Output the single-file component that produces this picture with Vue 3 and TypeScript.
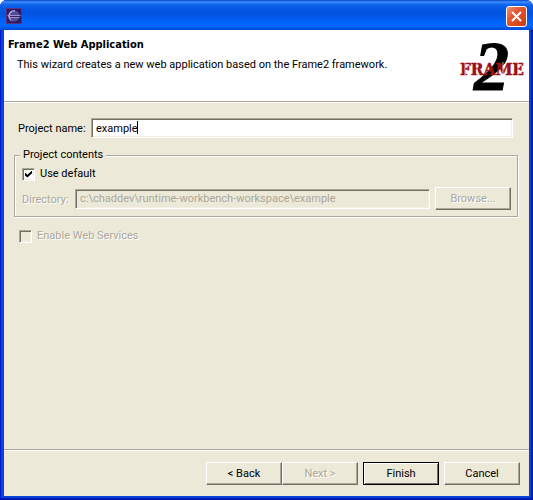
<script setup lang="ts">
import { ref } from 'vue'

const projectName = ref('example')
const useDefault = ref(true)
const webServices = ref(false)
const directory = ref('c:\\chaddev\\runtime-workbench-workspace\\example')
</script>

<template>
  <form class="window" @submit.prevent>
    <div class="titlebar">
      <svg class="app-icon" viewBox="0 0 16 16" aria-hidden="true">
        <rect width="16" height="16" fill="#2c1a66" />
        <rect x="0.5" y="0.5" width="15" height="15" fill="none" stroke="#5a3078" />
        <circle cx="8" cy="8" r="5.500" fill="#564b98" />
        <path d="M6 2.500a6 6 0 0 0 0 11 8 8 0 0 1 0-11z" fill="#b4b8e0" />
        <path d="M4.500 4.500Q6 2.500 9 2.800" fill="none" stroke="#cfd2f0" />
        <path d="M1.500 7.500h13M2.500 9.500h11" stroke="#9c90d0" />
        <path d="M4 8.500h10" stroke="#30205f" />
      </svg>
      <button class="close" type="button" aria-label="Close">
        <svg viewBox="0 0 19 19" aria-hidden="true">
          <path d="M5 5L14 14M14 5L5 14" stroke="#fff" stroke-width="2" />
        </svg>
      </button>
    </div>

    <div class="body">
      <header class="header">
        <div class="heading">
          <h1>Frame2 Web Application</h1>
          <p>This wizard creates a new web application based on the Frame2 framework.</p>
        </div>
        <svg class="logo" viewBox="0 0 70 60" role="img" aria-label="Frame2">
          <text class="logo-two" x="17" y="52">2</text>
          <text class="logo-word" x="3" y="37">FRAME</text>
          <path d="M8 24v14M20 24v14M46 24v14M61 24v14" stroke="#fff" stroke-width="0.700" />
        </svg>
      </header>

      <main class="content">
        <div class="row name-row">
          <label for="name">Project name:</label>
          <div class="name-box">
            <input id="name" v-model="projectName" class="field" type="text" />
            <span class="caret" aria-hidden="true"></span>
          </div>
        </div>

        <fieldset class="group">
          <legend>Project contents</legend>
          <label class="check">
            <input v-model="useDefault" type="checkbox" />
            <span>Use default</span>
          </label>
          <div class="row dir-row">
            <label class="disabled" for="directory">Directory:</label>
            <input id="directory" v-model="directory" class="field" type="text" disabled />
            <button class="btn" type="button" disabled>Browse...</button>
          </div>
        </fieldset>

        <label class="check services disabled">
          <input v-model="webServices" type="checkbox" disabled />
          <span>Enable Web Services</span>
        </label>
      </main>

      <footer class="footer">
        <div class="pair">
          <button class="btn" type="button">&lt; Back</button>
          <button class="btn" type="button" disabled>Next &gt;</button>
        </div>
        <button class="btn primary" type="submit">Finish</button>
        <button class="btn" type="button">Cancel</button>
      </footer>
    </div>
  </form>
</template>

<style>
body {
  margin: 0;
  background: #fff;
}
</style>

<style scoped>
.window {
  box-sizing: border-box;
  min-height: 100vh;
  display: flex;
  flex-direction: column;
  padding: 0 4px 4px;
  background: #0842d8;
  box-shadow: inset 1px 0 #0019cf, inset -2px -2px #0018b0;
  border-radius: 7px 7px 0 0;
  font: 11px/14px Roboto, Tahoma, sans-serif;
  color: #000;
}

.titlebar {
  box-sizing: border-box;
  height: 30px;
  margin: 0 -4px;
  padding: 2px 6px 0;
  display: flex;
  align-items: center;
  justify-content: space-between;
  border-radius: 7px 7px 0 0;
  background: linear-gradient(#0842c4 0, #3c92ff 2px, #1668f0 4px, #0458e2 8px, #0254e0 14px, #0264fa 22px, #0268ff 26px, #0048d0 30px);
}

.app-icon {
  width: 16px;
  height: 16px;
}

.close {
  width: 21px;
  height: 21px;
  padding: 0;
  box-sizing: border-box;
  border: 1px solid #fff;
  border-radius: 3px;
  background: linear-gradient(135deg, #ef9078, #e2562e 40%, #cc3a10);
}

.close svg {
  display: block;
  width: 19px;
  height: 19px;
}

.body {
  flex: 1;
  display: flex;
  flex-direction: column;
  background: #ece9d8;
}

.header {
  display: flex;
  justify-content: space-between;
  height: 71px;
  background: #fff;
  border-bottom: 1px solid #aca899;
  box-shadow: 0 1px #fff;
}

.heading {
  padding: 8px 0 0 4px;
}

h1 {
  margin: 0;
  font: bold 11px/14px "DejaVu Sans Condensed", Tahoma, sans-serif;
}

p {
  margin: 6px 0 0 9px;
  white-space: nowrap;
}

.logo {
  flex: none;
  width: 70px;
  height: 60px;
  margin: 8px 2px 0 0;
  overflow: visible;
}

.logo-two {
  font: italic bold 70px "Liberation Serif", serif;
  stroke: #000;
  stroke-width: 1px;
}

.logo-word {
  font: bold 17px "DejaVu Serif Condensed", "DejaVu Serif", serif;
  fill: #9b1016;
  stroke: #9b1016;
  stroke-width: 0.5px;
}

.content {
  flex: 1;
  padding: 16px 11px 0 10px;
}

.row {
  display: flex;
  align-items: center;
}

.row label {
  padding-top: 2px;
  white-space: nowrap;
}

.name-row {
  gap: 5px;
  padding: 0 5px 0 4px;
}

.name-row label {
  width: 68px;
}

.name-box {
  position: relative;
  flex: 1;
  display: flex;
}

.caret {
  position: absolute;
  left: 46px;
  top: 3px;
  width: 1px;
  height: 13px;
  background: #000;
}

.field {
  box-sizing: border-box;
  flex: 1;
  min-width: 0;
  height: 20px;
  margin: 0;
  padding: 0 4px;
  border: 1px solid;
  border-color: #aca899 #fff #fff #aca899;
  border-radius: 0;
  outline: 0;
  box-shadow: inset 1px 1px #716f64, inset -1px -1px #f1efe2;
  font: inherit;
  color: #000;
  background: #fff;
}

.field:disabled {
  color: #aca899;
  background: #ece9d8;
}

.group {
  min-width: 0;
  margin: 10px 0 0;
  padding: 5px 6px 6px 7px;
  border: 1px solid #aca899;
  box-shadow: 1px 1px #fff, inset 1px 1px #fff;
}

legend {
  margin-left: -2px;
  padding: 0 3px;
  background: #ece9d8;
}

.check {
  display: flex;
  align-items: center;
  gap: 5px;
}

.check input {
  appearance: none;
  box-sizing: border-box;
  width: 13px;
  height: 13px;
  margin: 0;
  padding: 1px;
  border: 1px solid;
  border-color: #aca899 #fff #fff #aca899;
  box-shadow: inset 1px 1px #716f64, inset -1px -1px #f1efe2;
  background: #fff;
  display: grid;
  place-items: center;
}

.check input:checked::before {
  content: "";
  width: 7px;
  height: 7px;
  background: #000;
  clip-path: polygon(0 30%, 35% 62%, 100% 0, 100% 40%, 35% 100%, 0 70%);
}

.check input:disabled {
  background: #ece9d8;
}

.disabled {
  color: #aca899;
  text-shadow: 1px 1px #fff;
}

.dir-row {
  gap: 5px;
  margin-top: 6px;
}

.dir-row label {
  width: 48px;
}

.btn {
  box-sizing: border-box;
  width: 76px;
  height: 23px;
  padding: 0;
  border: 1px solid;
  border-color: #fff #716f64 #716f64 #fff;
  border-radius: 0;
  box-shadow: inset -1px -1px #aca899;
  background: #ece9d8;
  font: inherit;
  color: #000;
}

.btn:disabled {
  color: #aca899;
  text-shadow: 1px 1px #fff;
}

.primary {
  border-color: #000;
  box-shadow: inset 1px 1px #fff, inset -1px -1px #716f64;
}

.services {
  margin: 12px 0 0 5px;
}

.footer {
  display: flex;
  justify-content: flex-end;
  gap: 5px;
  padding: 12px 9px 11px 0;
  border-top: 1px solid #aca899;
  box-shadow: inset 0 1px #fff;
}

.pair {
  display: flex;
}
</style>
